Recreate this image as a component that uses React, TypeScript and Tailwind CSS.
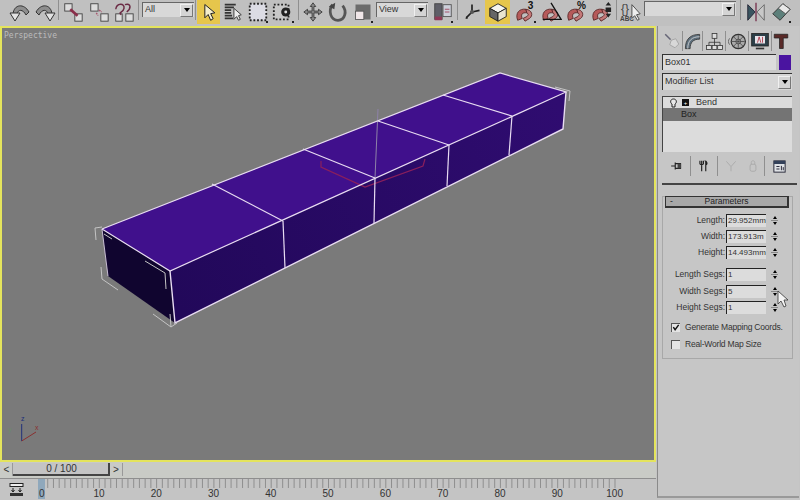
import type { ReactNode } from 'react'

const sans = 'font-["Liberation_Sans",Arial,sans-serif]'

function Icon({ children, size = 22 }: { children: ReactNode; size?: number }) {
  return (
    <svg viewBox="0 0 24 24" width={size} height={size} fill="none" aria-hidden="true">
      {children}
    </svg>
  )
}

function Tool({ w, children, active, corner }: { w: number; children: ReactNode; active?: boolean; corner?: boolean }) {
  return (
    <div
      style={{ width: w }}
      className={`relative flex h-[24px] shrink-0 items-center justify-center ${active ? 'bg-[#e6c64c]' : ''}`}
    >
      {children}
      {corner && <span className="absolute bottom-[1px] right-[2px] h-[2px] w-[2px] bg-[#222]" />}
    </div>
  )
}

function Sep({ w = 4 }: { w?: number }) {
  return (
    <div style={{ width: w }} className="flex h-[20px] shrink-0 justify-center">
      <span className="h-full w-[1px] bg-[#8f8f8f]" />
    </div>
  )
}

function DropArrow() {
  return (
    <span className="flex h-[13px] w-[13px] shrink-0 items-center justify-center border border-[#f0f0f0] border-r-[#777] border-b-[#777] bg-[#d4d4d4]">
      <span className="h-0 w-0 border-x-[3px] border-t-[4px] border-x-transparent border-t-black" />
    </span>
  )
}

function Dropdown({ w, label }: { w: number; label?: string }) {
  return (
    <div
      style={{ width: w }}
      className="flex h-[15px] shrink-0 items-center justify-between border-t border-l border-t-[#666] border-l-[#666] bg-[#d8d8d8] pl-[2px] pr-[1px] text-[9px] text-[#333]"
    >
      <span>{label}</span>
      <DropArrow />
    </div>
  )
}

function Arc({ flip }: { flip?: boolean }) {
  return (
    <Icon size={24}>
      <g transform={flip ? 'matrix(-1 0 0 1 24 0)' : undefined}>
        <path d="M5 14 C6 4 16 3 21 12 L18 15 C15 9 10 9 9 14 Z" fill="#8e8e8e" stroke="#333" strokeWidth="1" />
        <path d="M2 13 L12 13 L7 21 Z" fill="#e2e2e2" stroke="#333" strokeWidth="1" />
      </g>
    </Icon>
  )
}

function Squares({ kind }: { kind: 'link' | 'unlink' | 'bind' }) {
  return (
    <Icon>
      {kind !== 'bind' && <rect x="3" y="3" width="8" height="8" fill="#ddd" stroke="#444" />}
      <rect x="14" y="14" width="8" height="8" fill="#ddd" stroke="#444" />
      {kind === 'link' && <path d="M9 9 L17 16" stroke="#8a2e4a" strokeWidth="3" />}
      {kind === 'unlink' && <path d="M12 10 L15 12 M9 13 L11 16" stroke="#a8566e" strokeWidth="1.5" strokeDasharray="2 1" />}
      {kind === 'bind' && (
        <>
          <rect x="3" y="14" width="7" height="8" fill="#ddd" stroke="#444" />
          <path d="M3 9 C4 2 13 2 12 8 C11 13 5 12 9 15 M13 4 C20 2 20 8 15 12" stroke="#6b2a44" strokeWidth="1.6" />
        </>
      )}
    </Icon>
  )
}

function Magnet({ children }: { children?: ReactNode }) {
  return (
    <Icon>
      <path d="M4 21 C1 13 6 8 13 9 L14 13 C9 12 7 15 9 19 Z" fill="#b55a5a" stroke="#5c2a2a" strokeWidth="1" />
      <path d="M13 9 C20 10 21 16 17 19 L12 22 L10 19 L14 17 C16 15 16 14 14 13 Z" fill="#c47878" stroke="#5c2a2a" strokeWidth="1" />
      {children}
    </Icon>
  )
}

function TopToolbar() {
  return (
    <div className="flex h-[26px] shrink-0 items-start bg-[#c0c0c0] pl-[7px]">
      <Tool w={25}><Arc /></Tool>
      <Tool w={25}><Arc flip /></Tool>
      <Sep w={3} />
      <Tool w={26}><Squares kind="link" /></Tool>
      <Tool w={26}><Squares kind="unlink" /></Tool>
      <Tool w={24}><Squares kind="bind" /></Tool>
      <Sep />
      <div className="ml-[2px] mt-[2px] shrink-0"><Dropdown w={52} label="All" /></div>
      <Sep w={3} />
      <Tool w={23} active>
        <Icon size={20}>
          <path d="M7 3 L7 19 L11 15 L14 22 L17 20 L14 14 L19 13 Z" fill="#f4eecc" stroke="#222" strokeWidth="1.2" />
        </Icon>
      </Tool>
      <Tool w={25}>
        <Icon>
          <path d="M3 4 H15 M3 7 H13 M3 10 H10 M3 13 H10 M3 16 H11 M3 19 H12" stroke="#333" strokeWidth="2" />
          <path d="M13 8 L13 20 L16 17 L18 21 L20 20 L18 16 L21 15 Z" fill="#eee" stroke="#333" />
        </Icon>
      </Tool>
      <Tool w={25} corner>
        <Icon>
          <rect x="3" y="3" width="18" height="18" fill="#dcdce4" stroke="#222" strokeWidth="2" strokeDasharray="2 2" />
        </Icon>
      </Tool>
      <Tool w={26} corner>
        <Icon>
          <rect x="2" y="4" width="16" height="16" fill="#c8c8c8" stroke="#222" strokeWidth="2" strokeDasharray="2 2" />
          <circle cx="15" cy="12" r="5" fill="#222" />
          <circle cx="15" cy="12" r="1.6" fill="#ddd" />
        </Icon>
      </Tool>
      <Sep />
      <Tool w={25}>
        <Icon>
          <path d="M12 2 L15 6 H13 V11 H18 V9 L22 12 L18 15 V13 H13 V18 H15 L12 22 L9 18 H11 V13 H6 V15 L2 12 L6 9 V11 H11 V6 H9 Z" fill="#8a8a8a" stroke="#333" strokeWidth="0.9" />
        </Icon>
      </Tool>
      <Tool w={25}>
        <Icon>
          <path d="M6 4 C1 11 4 21 12 21 C20 21 22 11 17 5" stroke="#555" strokeWidth="3" />
          <path d="M2 6 L9 2 L8 9 Z" fill="#444" />
        </Icon>
      </Tool>
      <Tool w={25} corner>
        <Icon size={20}>
          <rect x="3" y="3" width="18" height="18" fill="#6c6c6c" />
          <rect x="3" y="11" width="10" height="10" fill="#f0e6e8" stroke="#555" />
        </Icon>
      </Tool>
      <div className="ml-[1px] mt-[2px] shrink-0"><Dropdown w={52} label="View" /></div>
      <div className="w-[2px] shrink-0" />
      <Tool w={25} corner>
        <Icon>
          <rect x="3" y="3" width="8" height="17" fill="#5f5f68" stroke="#444" />
          <rect x="3" y="17" width="8" height="4" fill="#8f3a58" />
          <rect x="12" y="4" width="9" height="13" fill="#cdd0da" stroke="#555" />
          <path d="M14 9 H19 M14 12 H19" stroke="#a04a62" />
        </Icon>
      </Tool>
      <Sep />
      <Tool w={25}>
        <Icon size={20}>
          <path d="M12 3 V12 M12 12 L21 10 M12 12 L5 19" stroke="#222" strokeWidth="2" />
          <circle cx="12" cy="12" r="2.5" fill="#555" />
          <path d="M4 20 L7 20 L6 17 Z" fill="#222" />
        </Icon>
      </Tool>
      <div className="w-[1px] shrink-0" />
      <Tool w={25} active>
        <Icon>
          <path d="M3 8 L12 3 L21 8 L12 13 Z" fill="#f5f5f0" stroke="#222" />
          <path d="M3 8 L12 13 V22 L3 17 Z" fill="#666" stroke="#222" />
          <path d="M21 8 L12 13 V22 L21 17 Z" fill="#e8e4d0" stroke="#222" />
        </Icon>
      </Tool>
      <div className="w-[2px] shrink-0" />
      <Tool w={26} corner>
        <Magnet>
          <text x="15" y="9" fontSize="11" fontWeight="700" fill="#111" fontFamily="Liberation Sans">3</text>
        </Magnet>
      </Tool>
      <Tool w={25}>
        <Magnet>
          <path d="M12 2 L23 20 H3" stroke="#111" strokeWidth="1.4" />
        </Magnet>
      </Tool>
      <Tool w={25}>
        <Magnet>
          <text x="13" y="9" fontSize="11" fontWeight="700" fill="#111" fontFamily="Liberation Sans">%</text>
        </Magnet>
      </Tool>
      <Tool w={26}>
        <Magnet>
          <path d="M20 1 L23 5 H17 Z M17 7 H23 V12 H17 Z M17 14 H23 L20 18 Z" fill="#222" />
        </Magnet>
      </Tool>
      <Sep />
      <Tool w={26}>
        <Icon>
          <text x="1" y="13" fontSize="13" fill="#444" fontFamily="Liberation Sans">{'{}'}</text>
          <text x="0" y="22" fontSize="7" fontWeight="700" fill="#444" fontFamily="Liberation Sans">ABC</text>
          <path d="M13 4 L13 19 L16 16 L19 21 L21 20 L18 15 L22 14 Z" fill="#eee" stroke="#444" />
        </Icon>
      </Tool>
      <div className="mt-[1px] shrink-0"><Dropdown w={92} /></div>
      <Sep w={8} />
      <Tool w={24}>
        <Icon>
          <path d="M3 4 L11 12 L3 21 Z" fill="#3a5560" stroke="#223" />
          <path d="M21 4 L13 12 L21 21 Z" fill="#c8c8c8" stroke="#666" />
          <path d="M12 2 V22" stroke="#7a3550" strokeWidth="1.5" />
        </Icon>
      </Tool>
      <Tool w={25} corner>
        <Icon>
          <path d="M3 14 L14 3 L22 9 L11 21 Z" fill="#5c7f7a" stroke="#333" />
          <path d="M14 3 L22 9 L17 14 L9 8 Z" fill="#e8e8e8" stroke="#555" />
        </Icon>
      </Tool>
    </div>
  )
}

function Viewport() {
  const line = '#e8dcf2'
  const far: [number, number][] = [[212, 185], [303, 150], [378, 122], [443, 96]]
  const near: [number, number][] = [[283, 222], [375, 179], [449, 146], [512, 117]]
  const low: [number, number][] = [[285, 269], [374, 224], [447, 187], [509, 156]]
  return (
    <div className="relative h-[436px] shrink-0 border-2 border-[#e4e45c] bg-[#7a7a7a]">
      <svg viewBox="2 29 652 432" className="block h-full w-full" fill="none" aria-hidden="true">
        <defs>
          <linearGradient id="front" x1="175" y1="300" x2="560" y2="110" gradientUnits="userSpaceOnUse">
            <stop offset="0" stopColor="#22085a" />
            <stop offset="1" stopColor="#2f0c70" />
          </linearGradient>
        </defs>
        <polygon points="102,230 170,272 566,93 500,74" fill="#40108c" />
        <polygon points="170,272 566,93 563,130 175,324" fill="url(#front)" />
        <polygon points="102,230 170,272 175,324 108,277" fill="#10052f" />

        <path d="M378 110 L375 179" stroke="#8e82a8" strokeWidth="1" />
        <path d="M321 162 L321 168 L365 188 L423 167 L425 160" stroke="#8a1f5c" strokeWidth="1.2" />

        <g stroke={line} strokeWidth="1.2">
          <polyline points="102,230 500,74 566,93 170,272 102,230" />
          <path d="M170 272 L175 324 L563 130 L566 93" strokeWidth="1.4" />
          <path d="M102 230 L108 277" strokeWidth="0.8" />
          {far.map((p, i) => (
            <g key={i}>
              <line x1={p[0]} y1={p[1]} x2={near[i][0]} y2={near[i][1]} />
              <line x1={near[i][0]} y1={near[i][1]} x2={low[i][0]} y2={low[i][1]} />
            </g>
          ))}
        </g>

        <g stroke="#c4c4c4" strokeWidth="1">
          <path d="M96 241 L95 229 L102 228" />
          <path d="M101 268 L102 280 L118 291" />
          <path d="M153 315 L171 328 L177 324" />
          <path d="M170 315 L171 328" />
          <path d="M145 262 L165 274 L166 290" />
          <path d="M104 235 L112 240" />
          <path d="M555 88 L570 92 L569 102" />
        </g>

        <path d="M21.7 425 V442" stroke="#20307a" strokeWidth="1" />
        <path d="M21.7 442 L36 433" stroke="#8a3030" strokeWidth="1" />
        <text x="21" y="422" fontSize="7" fill="#20307a" fontFamily="Liberation Sans">z</text>
        <text x="35" y="431" fontSize="7" fill="#8a3030" fontFamily="Liberation Sans">x</text>
        <text x="8" y="433" fontSize="7" fill="#6c8a6c" fontFamily="Liberation Sans">y</text>
      </svg>
      <span className="absolute left-[2px] top-[3px] font-['DejaVu_Sans_Mono',monospace] text-[8px] leading-[10px] text-[#bcbcbc]">
        Perspective
      </span>
    </div>
  )
}

function TimeSlider() {
  return (
    <div className="flex h-[16px] shrink-0 items-start bg-[#c9cbc6] pl-[1px] pt-[1px] text-[#333]">
      <button className="flex h-[13px] w-[12px] items-center justify-center border-r border-[#999] text-[10px] leading-none">&lt;</button>
      <div className="flex h-[13px] w-[97px] items-center justify-center border-b-2 border-r-2 border-[#444] bg-[#c4c4c4] pl-[2px] text-[10px] leading-none">0 / 100</div>
      <button className="flex h-[13px] w-[13px] items-center justify-center border-r border-[#999] text-[10px] leading-none">&gt;</button>
    </div>
  )
}

function Ruler() {
  const ticks = Array.from({ length: 101 }, (_, i) => i)
  const labels = [0, 10, 20, 30, 40, 50, 60, 70, 80, 90, 100]
  return (
    <div className="relative h-[22px] shrink-0 border-t border-[#8e8e8e] bg-[#c4c4c4]">
      <svg viewBox="0 0 656 9" width={656} height={9} className="block" aria-hidden="true">
        {ticks.map((t) => (
          <line key={t} x1={42 + t * 5.73} y1={0} x2={42 + t * 5.73} y2={9} stroke="#8f8f8f" />
        ))}
      </svg>
      <div className="flex pl-[13px] text-[10px] leading-[11px] text-[#333]">
        {labels.map((l) => (
          <span key={l} className="w-[57.3px] shrink-0 text-center">{l}</span>
        ))}
      </div>
      <div className="absolute left-[38px] top-0 h-[20px] w-[7px] bg-[#8fa8bc]" />
      <span className="absolute left-[39px] top-[9px] text-[10px] leading-[11px] text-[#333]">0</span>
      <div className="absolute left-[9px] top-[4px]">
        <svg viewBox="0 0 16 13" width={16} height={13} aria-hidden="true">
          <rect x="1" y="0.5" width="13" height="3" fill="#eee" stroke="#222" />
          <path d="M4 5 V9 M2.5 7 L4 9 L5.5 7 M11 5 V9 M9.5 7 L11 9 L12.5 7" stroke="#222" fill="none" />
          <rect x="1" y="10" width="13" height="3" fill="#333" />
        </svg>
      </div>
    </div>
  )
}

function Spinner() {
  return (
    <span className="ml-[4px] flex h-[13px] w-[9px] shrink-0 flex-col items-center justify-center gap-[1px]">
      <span className="h-0 w-0 border-x-[2.5px] border-b-[3px] border-x-transparent border-b-black" />
      <span className="h-[1px] w-[7px] bg-[#888]" />
      <span className="h-0 w-0 border-x-[2.5px] border-t-[3px] border-x-transparent border-t-black" />
    </span>
  )
}

function ParamRow({ label, value, mt }: { label: string; value: string; mt: string }) {
  return (
    <div className={`flex h-[13px] items-center ${mt}`}>
      <span className="w-[60px] shrink-0 text-right text-[8.5px] leading-none text-[#333]">{label}</span>
      <span className="ml-[1px] flex h-[13px] w-[40px] shrink-0 items-center overflow-hidden border-t border-l border-t-[#222] border-l-[#222] bg-[#dcdcdc] pl-[1px] text-[8px] leading-none whitespace-nowrap text-[#333]">
        {value}
      </span>
      <Spinner />
    </div>
  )
}

function Check({ label, checked }: { label: string; checked?: boolean }) {
  return (
    <div className="flex h-[12px] items-center">
      <span className="flex h-[9px] w-[9px] shrink-0 items-center justify-center border-t border-l border-t-[#555] border-l-[#555] bg-[#e4e4e4]">
        {checked && (
          <svg viewBox="0 0 9 9" width={9} height={9} aria-hidden="true">
            <path d="M1.5 4 L3.5 7 L7.5 1.5" stroke="#111" strokeWidth="1.6" fill="none" />
          </svg>
        )}
      </span>
      <span className="ml-[5px] whitespace-nowrap text-[8.5px] leading-none tracking-[-0.2px] text-[#333]">{label}</span>
    </div>
  )
}

function CommandTabs() {
  return (
    <div className="flex h-[24px] items-center justify-start">
      <div className="flex w-[20px] justify-center">
        <Icon size={18}>
          <path d="M3 3 L11 11 M11 11 L9 17 L16 21 L21 16 L17 9 Z" fill="#d8d8d8" stroke="#999" />
          <path d="M3 3 L10 10" stroke="#667" strokeWidth="2" />
        </Icon>
      </div>
      <Sep w={1} />
      <div className="flex w-[19px] justify-center">
        <Icon size={19}>
          <path d="M3 21 C3 9 9 3 21 3 V9 C13 9 9 13 9 21 Z" fill="#5e6f7c" stroke="#333" />
          <path d="M6 21 C6 11 11 6 21 6" stroke="#ddd" />
        </Icon>
      </div>
      <Sep w={1} />
      <div className="flex w-[22px] justify-center">
        <Icon size={19}>
          <rect x="9" y="2" width="6" height="6" fill="#ddd" stroke="#333" />
          <rect x="2" y="17" width="6" height="5" fill="#ddd" stroke="#333" />
          <rect x="9" y="17" width="6" height="5" fill="#ddd" stroke="#333" />
          <rect x="16" y="17" width="6" height="5" fill="#ddd" stroke="#333" />
          <path d="M12 8 V17 M5 17 V13 H19 V17" stroke="#333" />
        </Icon>
      </div>
      <Sep w={1} />
      <div className="flex w-[22px] justify-center">
        <Icon size={19}>
          <circle cx="13" cy="12" r="9" fill="#aaa" stroke="#333" strokeWidth="1.5" />
          <circle cx="13" cy="12" r="3" fill="#eee" stroke="#333" />
          <path d="M13 4 V20 M5 12 H21 M7 6 L19 18 M19 6 L7 18" stroke="#444" />
          <path d="M2 8 C0 11 0 13 2 16" stroke="#555" />
        </Icon>
      </div>
      <Sep w={1} />
      <div className="flex w-[22px] justify-center">
        <Icon size={20}>
          <rect x="2" y="3" width="20" height="15" fill="#2c3f48" stroke="#222" />
          <rect x="6" y="6" width="12" height="9" fill="#e8e4ea" />
          <path d="M9 14 L11 7 L13 14 M15 7 V14" stroke="#a83040" />
          <path d="M7 21 H17" stroke="#333" strokeWidth="2" />
        </Icon>
      </div>
      <Sep w={1} />
      <div className="flex w-[18px] justify-center">
        <Icon size={18}>
          <path d="M3 3 H21 V8 H15 V22 H10 V8 H3 Z" fill="#5a2a28" stroke="#222" />
        </Icon>
      </div>
    </div>
  )
}

function StackButtons() {
  return (
    <div className="mt-[5px] flex h-[18px] items-center pl-[2px]">
      <div className="flex w-[25px] justify-center">
        <Icon size={14}>
          <path d="M2 12 H9 M9 6 V18 M9 8 H18 V16 H9" stroke="#222" strokeWidth="2" />
          <rect x="13" y="8" width="6" height="8" fill="#444" />
        </Icon>
      </div>
      <Sep w={2} />
      <div className="flex w-[25px] justify-center">
        <Icon size={14}>
          <path d="M8 3 V21 M15 3 V21 M5 3 V8 C5 10 11 10 11 8 V3 M13 3 C18 3 18 10 15 10" stroke="#222" strokeWidth="2" />
        </Icon>
      </div>
      <Sep w={2} />
      <div className="flex w-[25px] justify-center">
        <Icon size={14}>
          <path d="M4 4 L12 13 L20 4 M12 13 V21" stroke="#a8a8a8" strokeWidth="1.5" />
        </Icon>
      </div>
      <div className="flex w-[20px] justify-center">
        <Icon size={14}>
          <rect x="7" y="9" width="10" height="12" rx="3" stroke="#a8a8a8" strokeWidth="1.5" />
          <path d="M9 9 V6 C9 2 15 2 15 6 V9" stroke="#a8a8a8" strokeWidth="1.5" />
        </Icon>
      </div>
      <Sep w={2} />
      <div className="flex w-[28px] justify-center">
        <Icon size={15}>
          <rect x="3" y="3" width="18" height="18" fill="#dfe2e6" stroke="#223" strokeWidth="1.5" />
          <rect x="3" y="3" width="18" height="5" fill="#33415a" />
          <path d="M7 12 H12 M7 16 H12 M15 11 V18 M18 13 V18" stroke="#223" strokeWidth="1.5" />
        </Icon>
      </div>
    </div>
  )
}

function CommandPanel() {
  return (
    <div className="ml-[1px] flex h-[472px] w-[142px] shrink-0 flex-col border-b-2 border-l border-b-[#999] border-l-[#8a8a8a] bg-[#c6c6c6] pl-[4px] pt-[3px]">
      <CommandTabs />
      <div className="mt-[1px] flex items-center">
        <div className="flex h-[16px] w-[114px] items-center border-t border-l border-t-[#333] border-l-[#333] bg-[#dcdcdc] pl-[2px] text-[9px] text-[#333]">Box01</div>
        <div className="ml-[3px] h-[15px] w-[12px] bg-[#4a14a0]" />
      </div>
      <div className="mt-[3px] flex h-[17px] w-[130px] items-center justify-between border-t border-l border-t-[#333] border-l-[#333] bg-[#d6d6d6] pl-[2px] pr-[1px] text-[9px] text-[#333]">
        <span>Modifier List</span>
        <DropArrow />
      </div>
      <div className="mt-[6px] h-[56px] w-[130px] border-t border-l border-t-[#444] border-l-[#444] bg-[#dcdcdc] text-[9px] text-[#333]">
        <div className="flex h-[11px] items-center pl-[6px]">
          <svg viewBox="0 0 9 10" width={9} height={10} aria-hidden="true">
            <path d="M4.5 1 C1 1 1 5 3 6 V9 H6 V6 C8 5 8 1 4.5 1 Z" fill="#e8e8e8" stroke="#222" />
          </svg>
          <span className="ml-[4px] flex h-[7px] w-[7px] items-center justify-center bg-[#111] text-[6px] leading-none text-white">+</span>
          <span className="ml-[7px]">Bend</span>
        </div>
        <div className="flex h-[13px] items-center bg-[#747474] pl-[18px] text-[#222]">Box</div>
      </div>
      <StackButtons />
      <div className="mt-[8px] h-[2px] w-[135px] bg-[#444]" />
      <div className="mt-[11px] w-[131px] border border-[#a8a8a8] px-[2px] pb-[8px]">
        <div className="-mt-[1px] flex h-[12px] w-[124px] items-center border-t border-l border-r-2 border-b-2 border-[#333] bg-[#a8a8a8] text-[8.5px] leading-none text-[#222]">
          <span className="w-[14px] pl-[4px]">-</span>
          <span className="flex-1 pr-[14px] text-center">Parameters</span>
        </div>
        <ParamRow mt="mt-[6px]" label="Length:" value="29.952mm" />
        <ParamRow mt="mt-[3px]" label="Width:" value="173.913m" />
        <ParamRow mt="mt-[3px]" label="Height:" value="14.493mm" />
        <ParamRow mt="mt-[9px]" label="Length Segs:" value="1" />
        <ParamRow mt="mt-[4px]" label="Width Segs:" value="5" />
        <ParamRow mt="mt-[3px]" label="Height Segs:" value="1" />
        <div className="mt-[7px] pl-[6px]">
          <Check label="Generate Mapping Coords." checked />
          <div className="mt-[5px]"><Check label="Real-World Map Size" /></div>
        </div>
      </div>
    </div>
  )
}

export default function App() {
  return (
    <div className={`relative flex h-[500px] w-[800px] flex-col overflow-hidden bg-[#c4c4c4] ${sans}`}>
      <TopToolbar />
      <div className="flex">
        <div className="flex w-[656px] shrink-0 flex-col">
          <Viewport />
          <TimeSlider />
          <Ruler />
        </div>
        <CommandPanel />
      </div>
      {/* mouse pointer */}
      <svg viewBox="0 0 12 18" width={12} height={18} className="absolute left-[777px] top-[290px]" aria-hidden="true">
        <path d="M1 1 V14 L4 11 L7 17 L9 16 L7 10 L11 10 Z" fill="#f4f4f4" stroke="#333" strokeWidth="0.8" />
      </svg>
    </div>
  )
}
